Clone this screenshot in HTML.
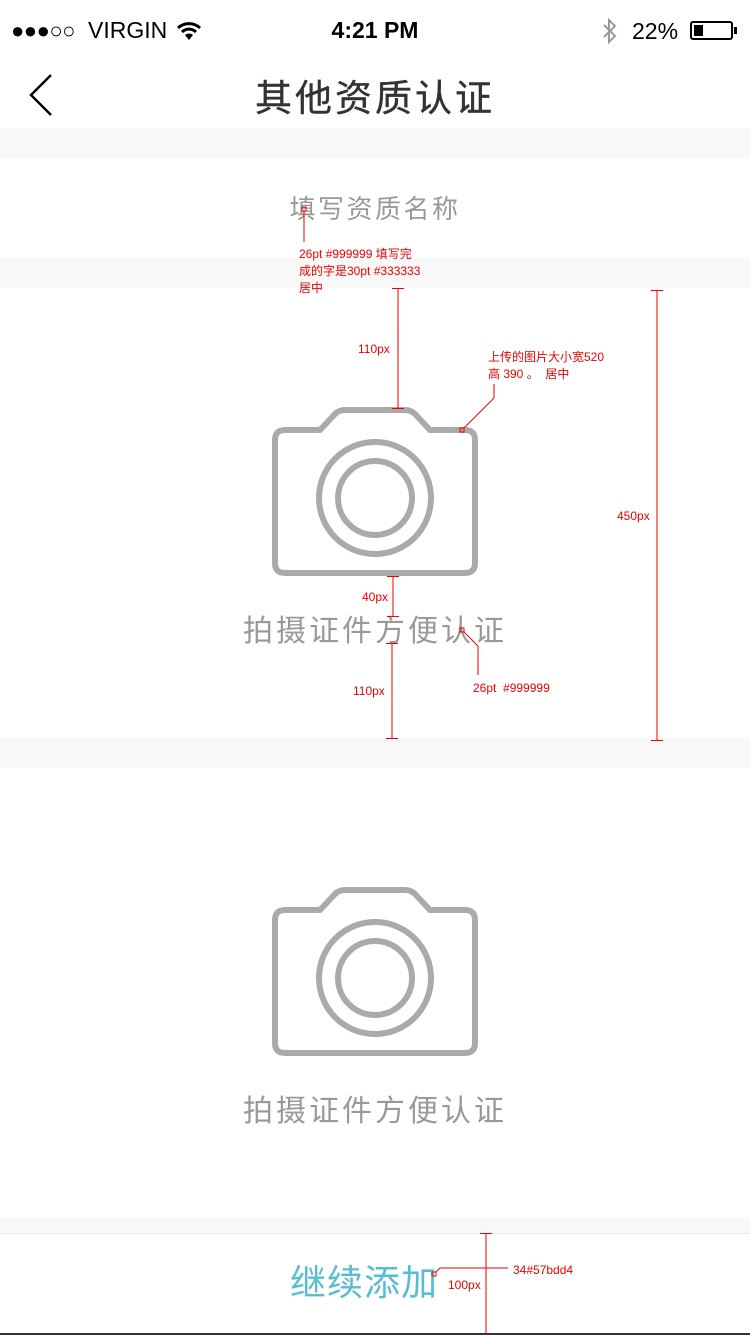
<!DOCTYPE html>
<html><head><meta charset="utf-8"><style>
*{margin:0;padding:0;box-sizing:border-box}
body{width:750px;height:1335px;position:relative;background:#fff;font-family:"Liberation Sans","Noto Sans CJK SC",sans-serif;overflow:hidden}
.a{position:absolute}
.g{position:absolute;left:0;width:750px;background:#f8f8f8}
.r{position:absolute;color:#e00;font-size:12px;line-height:17px;white-space:nowrap}
.t{position:absolute;left:0;width:750px;text-align:center;white-space:nowrap}
</style></head><body>
<!-- status bar -->
<div class="a" style="left:11px;top:18px;font-size:22px;color:#000;letter-spacing:-0.5px">●●●○○</div>
<div class="a" style="left:88px;top:17px;font-size:23px;color:#000">VIRGIN</div>
<svg class="a" style="left:176px;top:21px" width="26" height="20" viewBox="0 0 26 20"><path d="M2 7 A16 16 0 0 1 24 7" fill="none" stroke="#000" stroke-width="3"/><path d="M6 11 A10 10 0 0 1 20 11" fill="none" stroke="#000" stroke-width="3"/><path d="M13 19 L9 14 A6 6 0 0 1 17 14 Z" fill="#000"/></svg>
<div class="t" style="top:17px;font-size:23px;font-weight:bold;color:#000">4:21 PM</div>
<svg class="a" style="left:601px;top:17px" width="18" height="28" viewBox="0 0 18 28"><path d="M3 8 L14 19 L8 25 L8 3 L14 9 L3 20" fill="none" stroke="#999" stroke-width="2"/></svg>
<div class="a" style="left:632px;top:18px;font-size:23px;color:#000">22%</div>
<div class="a" style="left:690px;top:21px;width:43px;height:19px;border:2px solid #000;border-radius:3px"><div style="position:absolute;left:2px;top:2px;width:9px;height:11px;background:#000"></div></div>
<div class="a" style="left:734px;top:27px;width:3px;height:7px;background:#000"></div>
<!-- nav -->
<svg class="a" style="left:28px;top:73px" width="26" height="44" viewBox="0 0 26 44"><path d="M23 2 L3 22 L23 42" fill="none" stroke="#000" stroke-width="2.4"/></svg>
<div class="t" style="top:68px;font-size:37px;color:#333;letter-spacing:3px;-webkit-text-stroke:0.4px #333">其他资质认证</div>
<!-- bands -->
<div class="g" style="top:128px;height:30px"></div>
<div class="g" style="top:258px;height:30px"></div>
<div class="g" style="top:738px;height:30px"></div>
<div class="g" style="top:1218px;height:15px"></div>
<div class="a" style="left:0;top:1233px;width:750px;height:1px;background:#eee"></div>
<div class="a" style="left:0;top:1333px;width:750px;height:2px;background:#333"></div>
<div class="t" style="top:189px;font-size:26px;color:#999;letter-spacing:2.5px">填写资质名称</div>
<!-- cameras -->
<svg class="a" style="left:268px;top:404px" width="214" height="176" viewBox="268 404 214 176"><path d="M285 430 L320 430 L335 414 Q339 410 345 410 L405 410 Q411 410 415 414 L430 430 L465 430 Q475 430 475 440 L475 563 Q475 573 465 573 L285 573 Q275 573 275 563 L275 440 Q275 430 285 430 Z" fill="none" stroke="#aaa" stroke-width="6" stroke-linejoin="round"/><circle cx="375" cy="498" r="56" fill="none" stroke="#aaa" stroke-width="6"/><circle cx="375" cy="498" r="37" fill="none" stroke="#aaa" stroke-width="6"/></svg>
<div class="t" style="top:606px;font-size:30px;color:#999;letter-spacing:3px">拍摄证件方便认证</div>
<svg class="a" style="left:268px;top:884px" width="214" height="176" viewBox="268 404 214 176"><path d="M285 430 L320 430 L335 414 Q339 410 345 410 L405 410 Q411 410 415 414 L430 430 L465 430 Q475 430 475 440 L475 563 Q475 573 465 573 L285 573 Q275 573 275 563 L275 440 Q275 430 285 430 Z" fill="none" stroke="#aaa" stroke-width="6" stroke-linejoin="round"/><circle cx="375" cy="498" r="56" fill="none" stroke="#aaa" stroke-width="6"/><circle cx="375" cy="498" r="37" fill="none" stroke="#aaa" stroke-width="6"/></svg>
<div class="t" style="top:1086px;font-size:30px;color:#999;letter-spacing:3px">拍摄证件方便认证</div>
<div class="a" style="left:290px;top:1254px;font-size:36px;color:#57bdd4;letter-spacing:1px;white-space:nowrap">继续添加</div>
<!-- annotations -->
<svg class="a" style="left:0;top:0" width="750" height="1335">
<g stroke="#e00" stroke-width="1" fill="none">
<rect x="302" y="207" width="4" height="4"/><line x1="304" y1="211" x2="304" y2="242"/>
<line x1="398" y1="288" x2="398" y2="408"/><line x1="392" y1="288.5" x2="404" y2="288.5"/><line x1="392" y1="408.5" x2="404" y2="408.5"/>
<line x1="657" y1="290" x2="657" y2="740"/><line x1="651" y1="290.5" x2="663" y2="290.5"/><line x1="651" y1="740.5" x2="663" y2="740.5"/>
<rect x="460" y="428" width="4" height="4"/><line x1="464" y1="428" x2="494" y2="398"/><line x1="494" y1="398" x2="494" y2="384"/>
<line x1="393" y1="576" x2="393" y2="616"/><line x1="387" y1="576.5" x2="399" y2="576.5"/><line x1="387" y1="616.5" x2="399" y2="616.5"/>
<line x1="392" y1="643" x2="392" y2="738"/><line x1="386" y1="643.5" x2="398" y2="643.5"/><line x1="386" y1="738.5" x2="398" y2="738.5"/>
<rect x="460" y="628" width="4" height="4"/><line x1="464" y1="632" x2="478" y2="646"/><line x1="478" y1="646" x2="478" y2="675"/>
<rect x="432" y="1272" width="4" height="4"/><line x1="436" y1="1272" x2="440" y2="1268"/><line x1="440" y1="1268" x2="508" y2="1268"/>
<line x1="486" y1="1233" x2="486" y2="1335"/><line x1="480" y1="1233.5" x2="492" y2="1233.5"/>
</g></svg>
<div class="r" style="left:299px;top:246px">26pt #999999 填写完<br>成的字是30pt #333333<br>居中</div>
<div class="r" style="left:358px;top:341px">110px</div>
<div class="r" style="left:488px;top:349px">上传的图片大小宽520<br>高 390 。&nbsp;&nbsp;居中</div>
<div class="r" style="left:617px;top:508px">450px</div>
<div class="r" style="left:362px;top:589px">40px</div>
<div class="r" style="left:353px;top:683px">110px</div>
<div class="r" style="left:473px;top:680px">26pt&nbsp;&nbsp;#999999</div>
<div class="r" style="left:513px;top:1262px">34#57bdd4</div>
<div class="r" style="left:448px;top:1277px">100px</div>
</body></html>
